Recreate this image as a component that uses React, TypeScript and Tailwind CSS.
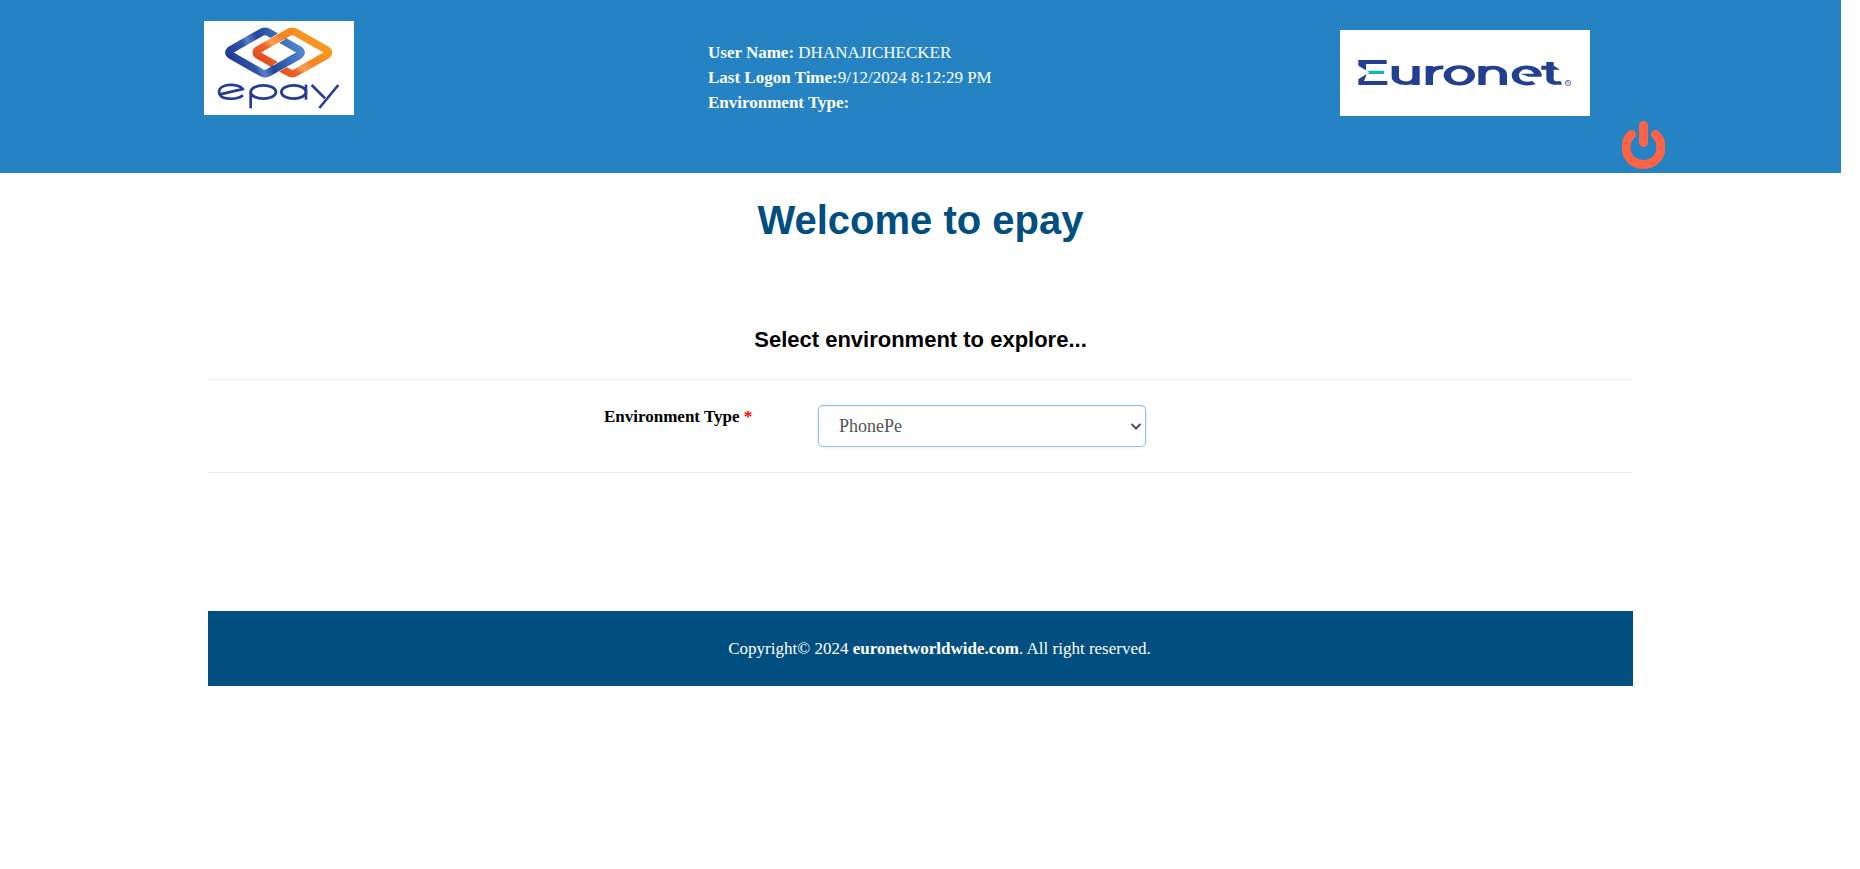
import React from "react";

function EpayLogo() {
  return (
    <svg viewBox="0 0 450 282" className="h-[94px] w-[150px] bg-white" role="img" aria-label="epay">
      <defs>
        <linearGradient id="blue" gradientUnits="userSpaceOnUse" x1="90" y1="140" x2="270" y2="50">
          <stop offset="0" stopColor="#213a94" />
          <stop offset="0.28" stopColor="#2f55ac" />
          <stop offset="0.36" stopColor="#5c80c6" />
          <stop offset="0.52" stopColor="#24459c" />
          <stop offset="0.8" stopColor="#3a6fbb" />
          <stop offset="1" stopColor="#5584c8" />
        </linearGradient>
        <linearGradient id="orange" gradientUnits="userSpaceOnUse" x1="200" y1="150" x2="300" y2="30">
          <stop offset="0" stopColor="#e2481f" />
          <stop offset="0.3" stopColor="#ee6428" />
          <stop offset="0.42" stopColor="#f8a155" />
          <stop offset="0.65" stopColor="#f58220" />
          <stop offset="1" stopColor="#f9981f" />
        </linearGradient>
      </defs>
      <g fill="none" strokeWidth="23">
        <path stroke="url(#blue)" d="M197 36 Q183 26 169 36 L81 86 Q69 94 81 103 L169 153 Q183 163 197 153 L285 103 Q297 94 285 86Z" />
        <path stroke="#fff" strokeWidth="26" d="M236 44 L196 68" />
        <path stroke="url(#orange)" d="M279 36 Q265 26 251 36 L163 86 Q151 94 163 103 L251 153 Q265 163 279 153 L367 103 Q379 94 367 86Z" />
        <path stroke="#fff" strokeWidth="26" d="M214 143 L252 121" />
        <path stroke="url(#blue)" d="M183 158 Q190 158 197 153 L285 103" />
      </g>
      <g fill="none" stroke="#263c93" strokeWidth="8">
        <path d="M48 220 L116 204 C106 187 45 185 45 213 C45 238 100 238 117 223" />
        <path d="M140 262 V212" />
        <ellipse cx="178" cy="213" rx="38" ry="20" />
        <ellipse cx="269" cy="213" rx="37" ry="20" />
        <path d="M306 191 V236" />
        <path d="M323 192 L363 232 M403 192 L346 261" />
      </g>
    </svg>
  );
}

function EuronetLogo() {
  return (
    <svg viewBox="0 0 750 258" className="h-[86px] w-[250px] bg-white" role="img" aria-label="Euronet">
      <g fill="#233f92">
        <path d="M55 90 H140 V102 H78 V121 L55 107Z" />
        <path d="M55 165 V148 L80 132 L72 153 H142 V165Z" />
        <path d="M542 131 H604 V140 H566Z" />
        <path d="M604 107 H642 L660 119 H604Z" />
      </g>
      <path fill="#0fb9b1" d="M82 122 H132 V132 H82 L88 127Z" />
      <g fill="none" stroke="#233f92" strokeWidth="11" transform="scale(2 1)">
        <path d="M83 108 V140 C83 166 114 166 114 142 M114 108 V165" />
        <path d="M134 165 V108 M134 138 C135 118 143 112 155 112" />
        <ellipse cx="179" cy="136" rx="18" ry="25" />
        <path d="M213 165 V108 M213 134 C214 106 245 106 245 134 V165" />
        <path d="M297 138 C297 104 263 104 263 136 C263 160 280 164 291 158" />
        <path d="M315 96 V145 C315 158 321 161 332 158" />
      </g>
      <circle cx="684" cy="159" r="8" fill="none" stroke="#6a7db5" strokeWidth="3" />
      <path d="M681 163 V155 H685 Q688 158 684 159 L688 163" fill="none" stroke="#6a7db5" strokeWidth="2" />
    </svg>
  );
}

function PowerIcon() {
  return (
    <svg viewBox="0 0 43 48" className="h-12 w-[43px]" fill="none" stroke="#ff6347" strokeWidth="9" strokeLinecap="round" aria-hidden="true">
      <path d="M9.500 13.500 C3 19 2 31 8 37.500 C15 45.500 28 45.500 35 37.500 C41 31 40 19 33.500 13.500" />
      <path d="M21.500 4.500 V21.500" />
    </svg>
  );
}

export default function App() {
  return (
    <div className="mr-[19px] bg-white font-['Liberation_Serif',serif] text-black">
      <header className="flex h-[173px] items-start bg-[#2583c4] pl-[204px] pr-[176px] text-white">
        <div className="mt-[21px] w-[504px]"><EpayLogo /></div>
        <div className="mt-10 text-[17px] leading-[25px]">
          <p><b>User Name:</b> DHANAJICHECKER</p>
          <p><b>Last Logon Time:</b>9/12/2024 8:12:29 PM</p>
          <p><b>Environment Type:</b></p>
        </div>
        <div className="ml-auto mt-[30px] flex gap-8">
          <EuronetLogo />
          <button type="button" aria-label="Log out" className="mt-[91px] cursor-pointer"><PowerIcon /></button>
        </div>
      </header>
      <main className="mx-[208px]">
        <h1 className="pt-6 text-center font-['Liberation_Sans',sans-serif] text-[40px] font-bold leading-[46px] text-[#004f80]">Welcome to epay</h1>
        <h2 className="mt-20 text-center font-['Liberation_Sans',sans-serif] text-[22px] font-bold leading-[34px]">Select environment to explore...</h2>
        <form className="mt-[22px] flex h-[94px] items-start border-y border-[#eeeeee] pl-[396px] pt-[25px]">
          <label htmlFor="environment" className="w-[214px] text-[17px] font-bold leading-6">
            Environment Type <span className="text-[#ff0000]">*</span>
          </label>
          <div className="relative w-[328px]">
            <select id="environment" className="h-[42px] w-full appearance-none rounded-[5px] border border-[#9fc3de] bg-white pl-5 text-lg text-[#555555] shadow-[inset_0_1px_1px_rgba(0,0,0,0.075),0_0_3px_rgba(102,175,233,0.4)] outline-none">
              <option>PhonePe</option>
            </select>
            <svg viewBox="0 0 12 8" className="pointer-events-none absolute right-1 top-[18px] h-2 w-3" fill="none" stroke="#555555" strokeWidth="2" aria-hidden="true">
              <path d="M1.500 1 L6 5.500 L10.500 1" />
            </svg>
          </div>
        </form>
        <footer className="mt-[138px] h-[75px] bg-[#004f80] pl-[38px] pt-6 text-center text-[17px] leading-7 text-white">
          Copyright© 2024 <a href="#" className="font-bold">euronetworldwide.com</a>. All right reserved.
        </footer>
      </main>
    </div>
  );
}
